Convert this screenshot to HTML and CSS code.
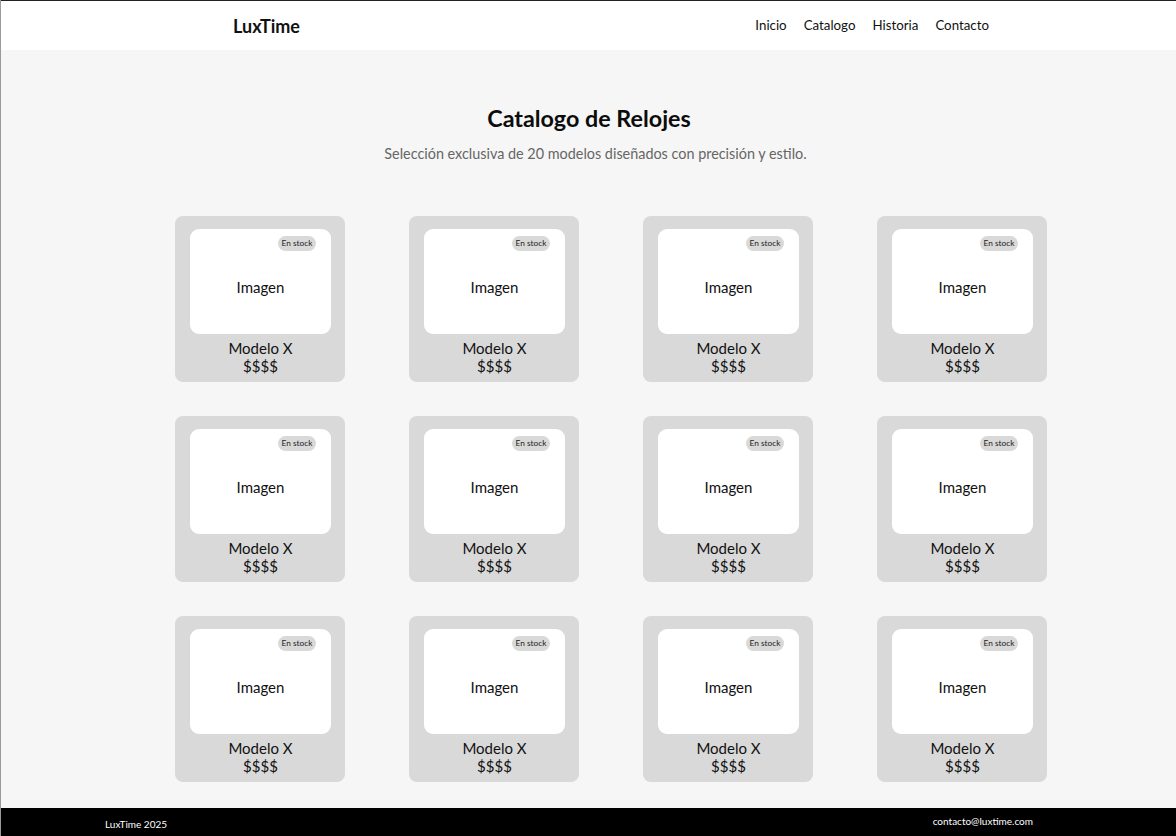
FILE: index.html
```html
<!DOCTYPE html>
<html lang="es">
<head>
<meta charset="utf-8">
<title>LuxTime - Catalogo</title>
<link rel="stylesheet" href="styles.css">
</head>
<body>
<header class="site-header">
  <div class="logo">LuxTime</div>
  <nav class="nav">
    <a href="#">Inicio</a>
    <a href="#">Catalogo</a>
    <a href="#">Historia</a>
    <a href="#">Contacto</a>
  </nav>
</header>
<main class="main">
  <h1 class="title">Catalogo de Relojes</h1>
  <p class="subtitle">Selección exclusiva de 20 modelos diseñados con precisión y estilo.</p>
  <section class="grid">
    <article class="card"><div class="img"><span class="badge">En stock</span>Imagen</div><div class="name">Modelo X</div><div class="price">$$$$</div></article>
    <article class="card"><div class="img"><span class="badge">En stock</span>Imagen</div><div class="name">Modelo X</div><div class="price">$$$$</div></article>
    <article class="card"><div class="img"><span class="badge">En stock</span>Imagen</div><div class="name">Modelo X</div><div class="price">$$$$</div></article>
    <article class="card"><div class="img"><span class="badge">En stock</span>Imagen</div><div class="name">Modelo X</div><div class="price">$$$$</div></article>
    <article class="card"><div class="img"><span class="badge">En stock</span>Imagen</div><div class="name">Modelo X</div><div class="price">$$$$</div></article>
    <article class="card"><div class="img"><span class="badge">En stock</span>Imagen</div><div class="name">Modelo X</div><div class="price">$$$$</div></article>
    <article class="card"><div class="img"><span class="badge">En stock</span>Imagen</div><div class="name">Modelo X</div><div class="price">$$$$</div></article>
    <article class="card"><div class="img"><span class="badge">En stock</span>Imagen</div><div class="name">Modelo X</div><div class="price">$$$$</div></article>
    <article class="card"><div class="img"><span class="badge">En stock</span>Imagen</div><div class="name">Modelo X</div><div class="price">$$$$</div></article>
    <article class="card"><div class="img"><span class="badge">En stock</span>Imagen</div><div class="name">Modelo X</div><div class="price">$$$$</div></article>
    <article class="card"><div class="img"><span class="badge">En stock</span>Imagen</div><div class="name">Modelo X</div><div class="price">$$$$</div></article>
    <article class="card"><div class="img"><span class="badge">En stock</span>Imagen</div><div class="name">Modelo X</div><div class="price">$$$$</div></article>
  </section>
</main>
<footer class="site-footer">
  <span class="foot-left">LuxTime 2025</span>
  <span class="foot-right">contacto@luxtime.com</span>
</footer>
</body>
</html>
```
FILE: styles.css
```css
* { box-sizing: border-box; }
html, body { margin: 0; padding: 0; }
body {
  font-family: Lato, "Open Sans", sans-serif;
  background: #f6f6f6;
  color: #111;
  width: 1176px;
  height: 836px;
  overflow: hidden;
  border-left: 1px solid #9a9a9a;
}
.site-header {
  height: 50px;
  background: #fff;
  border-top: 1px solid #222;
  display: flex;
  align-items: center;
  justify-content: space-between;
  padding: 0 187px 0 232px;
}
.logo {
  font-weight: 700;
  font-size: 18px;
  color: #111;
}
.nav {
  display: flex;
  gap: 17px;
  margin-top: -2px;
}
.nav a {
  color: #111;
  text-decoration: none;
  font-size: 13.3px;
}
.main {
  padding: 53px 0 26px 0;
}
.title {
  margin: 0;
  text-align: center;
  font-size: 23.3px;
  font-weight: 700;
  line-height: 30px;
  color: #0c0c0c;
  padding-left: 1px;
}
.subtitle {
  margin: 11px 0 0 0;
  text-align: center;
  font-size: 14.4px;
  line-height: 20px;
  color: #666;
  padding-left: 14px;
}
.grid {
  margin: 52px 0 0 174px;
  width: 872px;
  display: grid;
  grid-template-columns: repeat(4, 170px);
  justify-content: space-between;
  row-gap: 34px;
}
.card {
  background: #d9d9d9;
  border-radius: 8px;
  height: 166px;
  padding: 13px 14px 0 15px;
  display: flex;
  flex-direction: column;
  align-items: center;
}
.img {
  position: relative;
  width: 141px;
  height: 105px;
  background: #fff;
  border-radius: 9px;
  display: flex;
  align-items: center;
  justify-content: center;
  font-size: 15px;
  color: #111;
  flex-shrink: 0;
  padding-top: 10px;
}
.badge {
  position: absolute;
  top: 7px;
  right: 15px;
  width: 38px;
  height: 15px;
  border-radius: 8px;
  background: #d9d9d9;
  font-size: 8.3px;
  line-height: 15px;
  text-align: center;
  color: #222;
}
.name {
  margin-top: 5px;
  font-size: 15px;
  line-height: 18px;
  color: #111;
}
.price {
  font-size: 15px;
  line-height: 18px;
  color: #111;
}
.site-footer {
  height: 28px;
  background: #000;
  color: #fff;
  display: flex;
  justify-content: space-between;
  align-items: flex-start;
  padding: 0 143px 0 104px;
  font-size: 10px;
}
.foot-left { margin-top: 10px; }
.foot-right { margin-top: 7px; }
```
